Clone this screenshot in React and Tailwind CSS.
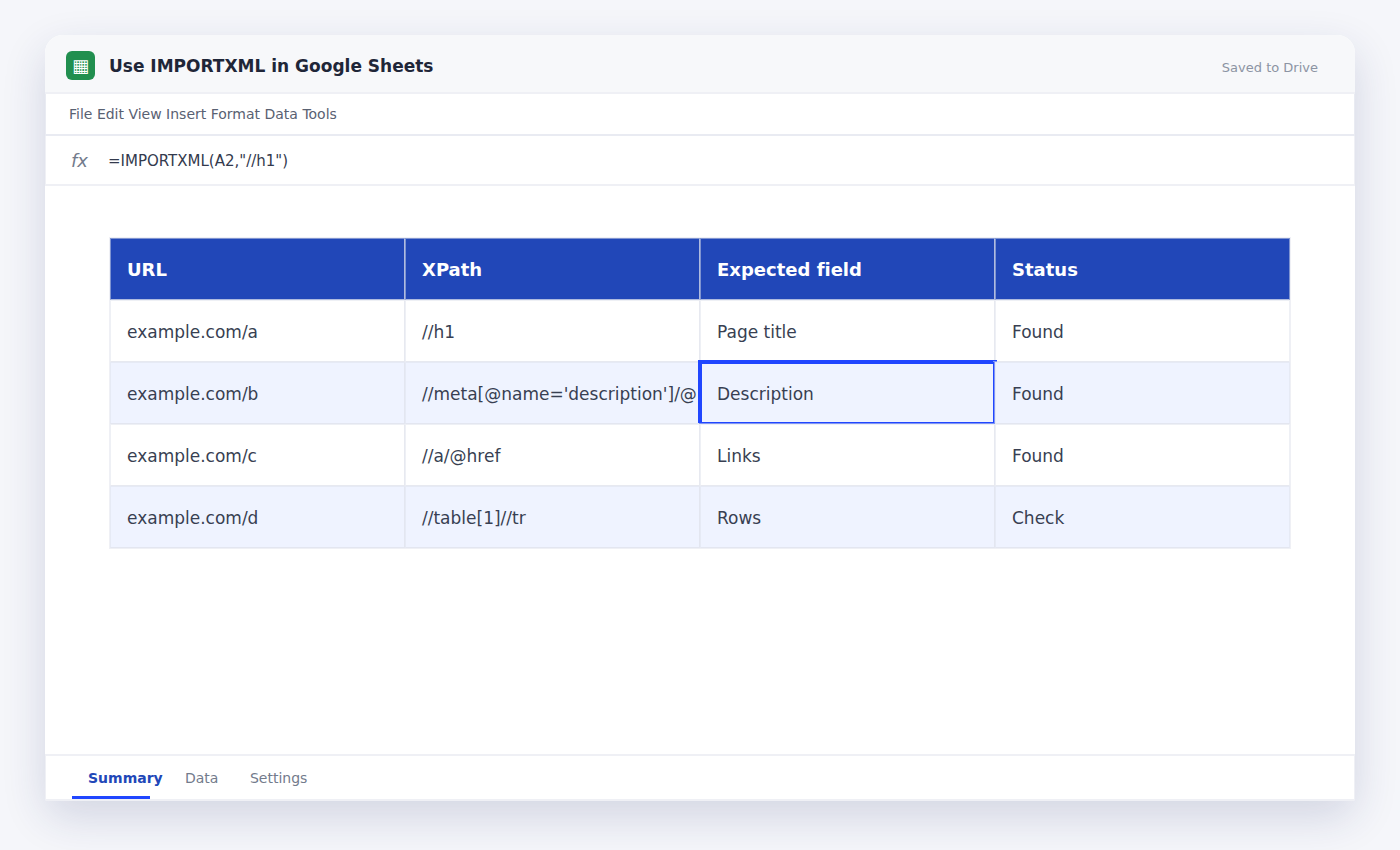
const menuItems = ['File', 'Edit', 'View', 'Insert', 'Format', 'Data', 'Tools'];

const columns = ['URL', 'XPath', 'Expected field', 'Status'];

const rows = [
  ['example.com/a', '//h1', 'Page title', 'Found'],
  ['example.com/b', "//meta[@name='description']/@", 'Description', 'Found'],
  ['example.com/c', '//a/@href', 'Links', 'Found'],
  ['example.com/d', '//table[1]//tr', 'Rows', 'Check'],
];

const selected = { row: 1, col: 2 };

const cellBase =
  'relative flex h-[62px] items-center whitespace-nowrap border border-t-[#dfe2ec]/50 border-l-[#dfe2ec]/50 border-r-[#dfe2ec]/75 border-b-[#dfe2ec]/75 pl-4';

// Outline of the active cell
const Selection = () => (
  <>
    <div className="absolute -top-[3px] -left-[3px] z-10 h-[63px] w-[296px] border border-t-4 border-l-4 border-[#2046ff] shadow-[1px_1px_0_0_#8095f5]" />
    <div className="absolute -top-[3px] left-[292px] z-10 h-0.5 w-1 border-t border-[#2046ff] bg-[#8095f5]" />
  </>
);

const TitleBar = () => (
  <header className="flex h-[59px] items-center rounded-t-[18px] border-b-2 border-[#eff0f5] bg-[#f7f8fa] pr-[37px] pl-[21px]">
    <div className="mt-[3px] flex size-[29px] items-center justify-center rounded-md bg-[#218f4f] pt-0.5 text-[18px] leading-none text-white">
      ▦
    </div>
    <h1 className="mt-1.5 ml-3.5 text-[17px] font-bold text-[#1f2638]">Use IMPORTXML in Google Sheets</h1>
    <span className="mt-2 ml-auto text-[13px] text-[#8c94a3]">Saved to Drive</span>
  </header>
);

const Sheet = () => (
  <div className="-m-px border border-[#eff0f5]">
    <div className="grid grid-cols-4">
      {columns.map((name) => (
        <div key={name} className={`${cellBase} bg-[#2147b8] text-[18px] font-bold text-white last:border-r-[#dfe2ec]/50`}>
          {name}
        </div>
      ))}
    </div>
    {rows.map((row, r) => (
      <div key={row[0]} className="grid grid-cols-4">
        {row.map((value, c) => (
          <div
            key={c}
            className={`${cellBase} pt-1 text-[17px] text-[#383f52] last:border-r-[#dfe2ec]/50 ${r % 2 ? 'bg-[#eff3ff]' : 'bg-white'}`}
          >
            {value}
            {r === selected.row && c === selected.col && <Selection />}
          </div>
        ))}
      </div>
    ))}
  </div>
);

const Tabs = () => (
  <footer className="flex h-[47px] items-start rounded-b-xs border-x border-t-2 border-b-2 border-[#eff0f5] bg-white pl-[26px] text-sm text-[#737b8c]">
    <div className="relative h-[43px] w-[78px] border-b-3 border-[#2046ff] pt-3 pl-4 font-bold text-[#2147b8]">
      Summary
    </div>
    <div className="pt-3 pl-[35px]">Data</div>
    <div className="pt-3 pl-[31.5px]">Settings</div>
  </footer>
);

export default function App() {
  return (
    <div className="h-[850px] w-[1400px] overflow-hidden bg-[#f5f6fa] px-[45px] pt-[35px] font-['DejaVu_Sans',sans-serif] [font-variant-ligatures:none]">
      <div className="flex h-[766px] flex-col rounded-t-[18px] rounded-b-xs bg-white">
        <div className="flex flex-1 flex-col rounded-[18px] shadow-[0_16px_44px_0_rgba(31,42,105,0.16)]">
          <TitleBar />
          <nav className="flex h-[42px] items-center border-x border-b-2 border-[#e9ebf2] bg-white pl-[23px] text-sm text-[#596172]">
            {menuItems.join(' ')}
          </nav>
          <div className="flex h-[50px] items-center border-x border-b-2 border-[#eff0f5] bg-white pl-[25px]">
            <span className="w-[37px] pt-px text-[18px] text-[#737b8c] italic">fx</span>
            <span className="pt-0.5 text-[15px] text-[#333a4d]">=IMPORTXML(A2,"//h1")</span>
          </div>
          <main className="flex-1 px-[65px] pt-[52px]">
            <Sheet />
          </main>
          <Tabs />
        </div>
      </div>
    </div>
  );
}
